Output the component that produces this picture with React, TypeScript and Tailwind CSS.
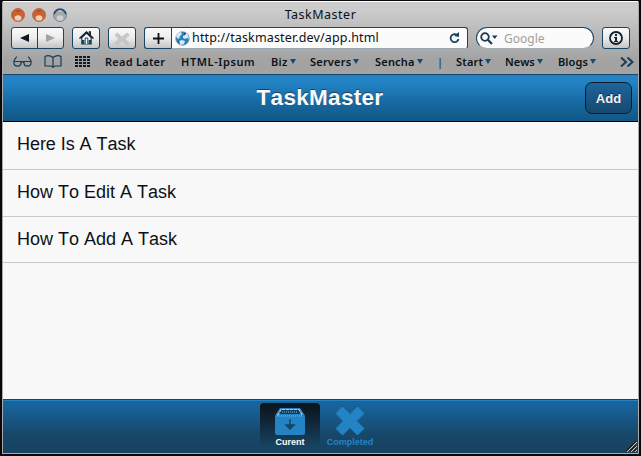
import React from 'react';

type Bookmark = { label: string; cell: string; text: string; menu?: boolean };

const bookmarks: Bookmark[] = [
  { label: 'Read Later', cell: 'w-[76px]', text: 'tracking-[0.25px]' },
  { label: 'HTML-Ipsum', cell: 'w-[90px]', text: 'tracking-[0.6px]' },
  { label: 'Biz', cell: 'w-[39px]', text: 'tracking-[0.3px]', menu: true },
  { label: 'Servers', cell: 'w-[65px]', text: 'tracking-[0.2px]', menu: true },
  { label: 'Sencha', cell: 'w-[62px]', text: 'tracking-[0.2px]', menu: true },
  { label: '|', cell: 'w-[19px]', text: 'text-[#174a72]' },
  { label: 'Start', cell: 'w-[49px]', text: 'tracking-[0.2px]', menu: true },
  { label: 'News', cell: 'w-[53px]', text: 'tracking-[0.1px]', menu: true },
  { label: 'Blogs', cell: 'w-[62px]', text: 'tracking-[0.1px]', menu: true },
];

const tasks = [
  { name: 'Here Is A Task', row: 'h-[48px] pb-[4px] tracking-[-0.05px]' },
  { name: 'How To Edit A Task', row: 'h-[47px] pb-[2px]' },
  { name: 'How To Add A Task', row: 'h-[46px] pb-[2px]' },
];

const button =
  'flex h-[22px] shrink-0 items-center justify-center rounded-[3px] border border-[#174565] bg-linear-to-b from-[#fafafa] via-[#ececec] to-[#c4c4c4]';

function Caret() {
  return (
    <svg width="6" height="5" viewBox="0 0 6 5" className="shrink-0">
      <path d="M0 0h6L3 5z" fill="#174a72" />
    </svg>
  );
}

function Light({ active }: { active?: boolean }) {
  return (
    <svg width="14" height="14" viewBox="0 0 14 14">
      <circle cx="7" cy="7" r="6.5" fill={active ? '#c8602f' : '#a4a6a8'} stroke={active ? '#c06a42' : '#76899a'} strokeWidth="1" />
      {!active && <path d="M1.2 6a6 6 0 0 1 11.6 0" fill="none" stroke="#1c4b6e" strokeWidth="1.6" />}
      <path d="M4.500 3Q7 1.500 9.500 3Q7 4.500 4.500 3" fill={active ? '#a34a22' : '#b9d3e4'} />
      <ellipse cx="7" cy="10" rx="3.400" ry="2.800" fill={active ? '#eecfbe' : '#cfcfcf'} />
    </svg>
  );
}

function Globe() {
  return (
    <svg width="15" height="15" viewBox="0 0 15 15" className="shrink-0">
      <circle cx="7.5" cy="7.5" r="6.8" fill="#2382c4" stroke="#8a9ba8" strokeWidth=".8" />
      <path d="M1 5l2-3 3-1 1 2-2 2-1 3-2-1zM8 5l2-1 1-2 2 2 1 4-2-1-2 1-2-1zM4 10l3-1 3 1-1 3-3 1-1-1z" fill="#dce6ec" />
      <path d="M9 1.5l2 1-2 2zM3 9l2 3-2-1z" fill="#174565" />
    </svg>
  );
}

function Toolbar() {
  return (
    <div className="flex h-[22px] pl-[8px]">
      <div className={`${button} w-[53px]`}>
        <div className="flex h-full w-[26px] items-center justify-center border-r border-[#174565]">
          <svg width="9" height="8" viewBox="0 0 9 8"><path d="M0 4L9 0v8z" fill="#101a24" /></svg>
        </div>
        <div className="flex h-full flex-1 items-center justify-center">
          <svg width="9" height="8" viewBox="0 0 9 8"><path d="M9 4L0 0v8z" fill="#a2a2a2" /></svg>
        </div>
      </div>
      <div className={`${button} ml-[8px] w-[28px]`}>
        <svg width="15" height="14" viewBox="0 0 15 14">
          <path d="M2.8 6.5V13h9.4V6.5L7.5 2z" fill="#f5f5f5" stroke="#173d59" strokeWidth="1.2" />
          <path d="M.5 7.5L7.5 1l7 6.5M11.2 4V1h-1.4" fill="none" stroke="#101a24" strokeWidth="1.5" />
          <path d="M3 9h2.4v4H3zM9.6 9H12v4H9.6z" fill="#174565" />
          <path d="M6.2 13V7h2.6v6" fill="#fff" stroke="#174565" />
        </svg>
      </div>
      <div className={`${button} ml-[8px] w-[28px]`}>
        <svg width="16" height="15" viewBox="0 0 16 15">
          <path d="M3 2l5 4 5-4 2 2-4 4 4 4-2 2-5-4-5 4-2-2 4-4-4-4z" fill="#c7c7c7" stroke="#c0c0c0" strokeWidth="1.2" strokeDasharray="1.4 1.2" />
        </svg>
      </div>
      <div className={`${button} ml-[8px] w-[27px] rounded-r-none border-r-0`}>
        <svg width="11" height="11" viewBox="0 0 11 11"><path d="M5.5 0v11M0 5.5h11" stroke="#0c1116" strokeWidth="1.8" /></svg>
      </div>
      <div className="flex h-[22px] w-[297px] items-center rounded-r-[3px] border border-[#174565] border-b-[#9aa9b3] bg-[#fbfbfb] pr-[7px] pl-[3px]">
        <Globe />
        <span className="ml-[2px] flex-1 text-[12.500px] leading-[20px] tracking-[0.15px] whitespace-nowrap">http://taskmaster.dev/app.html</span>
        <svg width="11" height="12" viewBox="0 0 11 12">
          <path d="M8.3 3.2A4 4 0 1 0 9.5 7" fill="none" stroke="#174565" strokeWidth="1.8" />
          <path d="M5 3.9L10 5V0z" fill="#174565" />
        </svg>
      </div>
      <div className="ml-[8px] flex h-[22px] w-[118px] items-center rounded-full border border-[#174565] border-b-[#a6b0b6] bg-[#fbfbfb] pl-[3px]">
        <svg width="18" height="13" viewBox="0 0 18 13">
          <circle cx="5" cy="5" r="3.8" fill="none" stroke="#173d59" strokeWidth="1.8" />
          <path d="M7.8 7.8L12 12" stroke="#173d59" strokeWidth="2.2" />
          <path d="M12 3.5h5.5L14.7 7z" fill="#173d59" />
        </svg>
        <span className="ml-[6px] pt-px text-[12px] text-[#a0a0a0]">Google</span>
      </div>
      <div className={`${button} ml-[8px] w-[28px]`}>
        <svg width="14" height="14" viewBox="0 0 14 14">
          <circle cx="7" cy="7" r="6" fill="#f2f2f2" stroke="#10202d" strokeWidth="1.8" />
          <path d="M6 3h2v2H6zM5 6h3v4h1v1H5v-1h1V7H5z" fill="#10202d" />
        </svg>
      </div>
    </div>
  );
}

function BookmarksBar() {
  return (
    <div className="flex h-[24px] items-center pt-px pl-[10px]">
      <svg width="19" height="11" viewBox="0 0 19 11" fill="none" stroke="#173d59" strokeWidth="1.2">
        <path d="M4 .8Q2.500 1 .8 5.500M15 .8Q16.500 1 18.2 5.500M8 6.500q1.500-1.500 3 0" />
        <path d="M1 5.500h7v1.500a3 2.600 0 0 1-7 0zM11 5.500h7v1.500a3 2.600 0 0 1-7 0z" />
      </svg>
      <svg className="ml-[12px]" width="18" height="13" viewBox="0 0 18 13" fill="none" stroke="#173d59" strokeWidth="1.2">
        <path d="M9 2.500Q5-.5 1 1.500V11h6l2 1.200L11 11h6V1.500Q13-.5 9 2.500V11.500" />
      </svg>
      <svg className="ml-[13px]" width="15" height="11" viewBox="0 0 15 11" fill="#101a24">
        {[0, 3, 6, 9].map((y) => [0, 4, 8, 12].map((x) => <rect key={`${x}-${y}`} x={x} y={y} width="3" height="2" />))}
      </svg>
      <div className="ml-[15px] flex items-center text-[11px] leading-[14px] font-semibold">
        {bookmarks.map((b) => (
          <div key={b.label} className={`flex shrink-0 items-center gap-[2px] whitespace-nowrap ${b.cell}`}>
            <span className={b.text}>{b.label}</span>
            {b.menu && <Caret />}
          </div>
        ))}
        <svg width="14" height="10" viewBox="0 0 14 10" fill="none" stroke="#173d59" strokeWidth="2">
          <path d="M1 .5L6 5 1 9.500M7.500.5l5 4.500-5 4.500" />
        </svg>
      </div>
    </div>
  );
}

export default function App() {
  return (
    <div className="h-[456px] w-[641px] overflow-hidden bg-[#08080c] pt-px pl-[2px] font-['Liberation_Sans',Arial,sans-serif] text-[#0c1116]">
      <div className="flex h-[453px] w-[637px] flex-col rounded-t-[2px] border-x border-b border-[#aaa] bg-[#f8f8f8]">
        <div className="h-[73px] shrink-0 border-t border-white bg-linear-to-b from-[#cccccc] from-10% via-[#c4c4c4] via-25% to-[#a3a3a3] to-80% font-['Noto_Sans','Open_Sans',sans-serif]">
          <div className="flex h-[25px] items-center">
            <div className="flex w-[100px] gap-[7px] pl-[8px]">
              <Light active />
              <Light active />
              <Light />
            </div>
            <div className="w-[435px] text-center text-[12.500px] leading-[16px] tracking-[0.5px]">TaskMaster</div>
          </div>
          <Toolbar />
          <BookmarksBar />
        </div>
        <header className="flex h-[48px] shrink-0 items-center border-t border-b border-t-[#174565] border-b-black bg-linear-to-b from-[#2383c5] from-15% via-[#1769a3] via-60% to-[#125784]">
          <div className="w-[80px]" />
          <h1 className="flex-1 pr-[2px] text-center text-[22.500px] leading-[26px] font-bold tracking-[0.3px] text-[#fafafa] [font-kerning:none] [text-shadow:0_-1px_0_#174565]">TaskMaster</h1>
          <div className="w-[79px] pl-[26px]">
            <button className="flex h-[32px] w-[47px] items-center justify-center rounded-[7px] border border-[#0b1b29] bg-linear-to-b from-[#1d659b] to-[#174970] pt-px text-[13px] font-bold text-[#f5f5f5] [text-shadow:0_-1px_0_#102b40]">Add</button>
          </div>
        </header>
        <main className="flex-1">
          {tasks.map((t) => (
            <div key={t.name} className={`flex items-center border-b border-[#c8c8c8] pl-[14px] text-[18px] leading-[22px] whitespace-nowrap [font-kerning:none] ${t.row}`}>{t.name}</div>
          ))}
        </main>
        <footer className="relative flex h-[54px] shrink-0 border-t border-[#174565] bg-linear-to-b from-[#17639a] from-12% via-[#174769] via-65% to-[#174261] pl-[257px] shadow-[inset_0_1px_0_#2383c5]">
          <div className="mt-[3px] flex h-[48px] w-[60px] flex-col items-center rounded-[4px] bg-linear-to-b from-[#0c1821] from-10% via-[#112c41] via-50% to-[#174361] to-90% pt-[5px]">
            <svg width="30" height="27" viewBox="0 0 30 27">
              <path d="M5 0h20l4 6q1 1 1 3v16q0 2-2 2H2q-2 0-2-2V9q0-2 1-3z" fill="#2383c5" />
              <path d="M6 2h18l2 4H4z" fill="#173d59" />
              <path d="M2.500 7.500L6 1.500h18l3.500 6" fill="none" stroke="#c2c8cd" strokeWidth="1.200" strokeDasharray="3 1" />
              <path d="M7 4h16M2 8h26" stroke="#83b4d8" strokeWidth="1" strokeDasharray="1 1" />
              <path d="M15 11v8M11 17l4 4 4-4z" fill="#174565" stroke="#174565" strokeWidth="1.500" />
            </svg>
            <span className="mt-[2px] text-[9px] leading-[10px] font-bold text-white">Curent</span>
          </div>
          <div className="mt-[3px] flex w-[60px] flex-col items-center pt-[3px] text-[#2383c5]">
            <svg width="30" height="30" viewBox="0 0 30 30" fill="currentColor">
              <path d="M7.500 1L15 8.500 22.500 1 29 7.500 21.500 15 29 22.500 22.500 29 15 21.500 7.500 29 1 22.500 8.500 15 1 7.500z" stroke="currentColor" strokeLinejoin="round" />
            </svg>
            <span className="mt-px text-[9px] leading-[10px] font-bold">Completed</span>
          </div>
          <svg className="absolute right-px bottom-px" width="11" height="11" viewBox="0 0 11 11" strokeWidth="1">
            <path d="M0 10L10 0M4 10l6-6M8 10l2-2" stroke="#0c1116" />
            <path d="M1 11L11 1M5 11l6-6M9 11l2-2" stroke="#c8c8c8" />
          </svg>
        </footer>
      </div>
    </div>
  );
}
